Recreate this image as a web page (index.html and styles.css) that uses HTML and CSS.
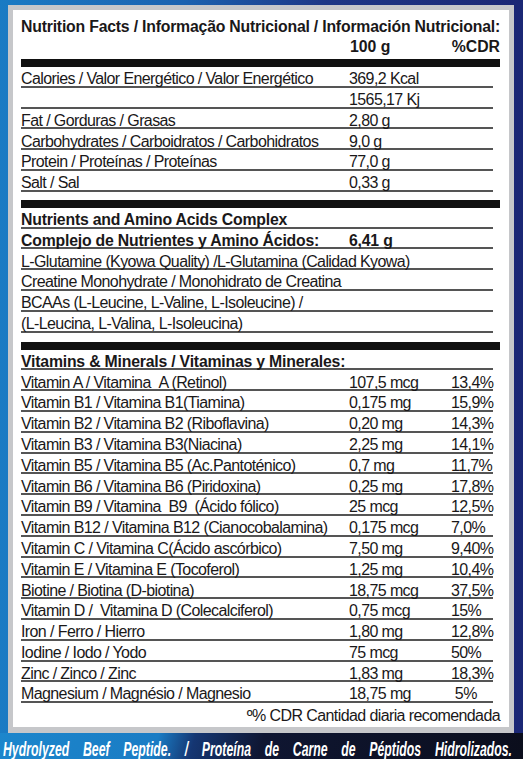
FILE: index.html
```html
<!DOCTYPE html>
<html>
<head>
    <meta charset="utf-8">
    <title>Nutrition Facts</title>
    <link rel="stylesheet" href="styles.css">
</head>
<body>
<div class="label">
    <div class="label-title">Nutrition Facts / Informação Nutricional / Información Nutricional:</div>
    <div class="label-head"><span></span><span>100 g</span><span>%CDR</span></div>
    <div class="bar"></div>
    <div class="rows">
        <div class="row"><span>Calories / Valor Energético / Valor Energético</span><span>369,2 Kcal</span><span></span></div>
        <div class="row"><span></span><span>1565,17 Kj</span><span></span></div>
        <div class="row"><span>Fat / Gorduras / Grasas</span><span>2,80 g</span><span></span></div>
        <div class="row"><span>Carbohydrates / Carboidratos / Carbohidratos</span><span>9,0 g</span><span></span></div>
        <div class="row"><span>Protein / Proteínas / Proteínas</span><span>77,0 g</span><span></span></div>
        <div class="row"><span>Salt / Sal</span><span>0,33 g</span><span></span></div>
    </div>
    <div class="bar gap-8"></div>
    <div class="rows">
        <div class="row strong"><span>Nutrients and Amino Acids Complex</span><span></span><span></span></div>
        <div class="row strong"><span>Complejo de Nutrientes y Amino Ácidos:</span><span>6,41 g</span><span></span></div>
        <div class="row"><span>L-Glutamine (Kyowa Quality) /L-Glutamina (Calidad Kyowa)</span></div>
        <div class="row"><span>Creatine Monohydrate / Monohidrato de Creatina</span></div>
        <div class="row"><span>BCAAs (L-Leucine, L-Valine, L-Isoleucine) /</span></div>
        <div class="row"><span>(L-Leucina, L-Valina, L-Isoleucina)</span></div>
    </div>
    <div class="bar gap-9"></div>
    <div class="rows">
        <div class="row strong"><span>Vitamins &amp; Minerals / Vitaminas y Minerales:</span><span></span><span></span></div>
        <div class="row"><span>Vitamin A / Vitamina &nbsp;A (Retinol)</span><span>107,5 mcg</span><span>13,4%</span></div>
        <div class="row"><span>Vitamin B1 / Vitamina B1(Tiamina)</span><span>0,175 mg</span><span>15,9%</span></div>
        <div class="row"><span>Vitamin B2 / Vitamina B2 (Riboflavina)</span><span>0,20 mg</span><span>14,3%</span></div>
        <div class="row"><span>Vitamin B3 / Vitamina B3(Niacina)</span><span>2,25 mg</span><span>14,1%</span></div>
        <div class="row"><span>Vitamin B5 / Vitamina B5 (Ac.Pantoténico)</span><span>0,7 mg</span><span>11,7%</span></div>
        <div class="row"><span>Vitamin B6 / Vitamina B6 (Piridoxina)</span><span>0,25 mg</span><span>17,8%</span></div>
        <div class="row"><span>Vitamin B9 / Vitamina &nbsp;B9 &nbsp;(Ácido fólico)</span><span>25 mcg</span><span>12,5%</span></div>
        <div class="row"><span>Vitamin B12 / Vitamina B12 (Cianocobalamina)</span><span>0,175 mcg</span><span>7,0%</span></div>
        <div class="row"><span>Vitamin C / Vitamina C(Ácido ascórbico)</span><span>7,50 mg</span><span>9,40%</span></div>
        <div class="row"><span>Vitamin E / Vitamina E (Tocoferol)</span><span>1,25 mg</span><span>10,4%</span></div>
        <div class="row"><span>Biotine / Biotina (D-biotina)</span><span>18,75 mcg</span><span>37,5%</span></div>
        <div class="row"><span>Vitamin D / &nbsp;Vitamina D (Colecalciferol)</span><span>0,75 mcg</span><span>15%</span></div>
        <div class="row"><span>Iron / Ferro / Hierro</span><span>1,80 mg</span><span>12,8%</span></div>
        <div class="row"><span>Iodine / Iodo / Yodo</span><span>75 mcg</span><span>50%</span></div>
        <div class="row"><span>Zinc / Zinco / Zinc</span><span>1,83 mg</span><span>18,3%</span></div>
        <div class="row"><span>Magnesium / Magnésio / Magnesio</span><span>18,75 mg</span><span>&nbsp;5%</span></div>
    </div>
    <p class="note">º% CDR Cantidad diaria recomendada</p>
</div>
<div class="strip">
    <p>Hydrolyzed Beef Peptide. / Proteína de Carne de Péptidos Hidrolizados.</p>
</div>
</body>
</html>
```
FILE: styles.css
```css
html,body{
    margin: 0;
    height: 759px;
    overflow: hidden;
}
body{
    display: flex;
    flex-direction: column;
    background: linear-gradient(to right, #1a7bc4 0%, #1b62b0 35%, #1e3786 62%, #1b2775 100%);
    font-family: "Liberation Sans", Arial, sans-serif;
    color: #1a1819;
}
.label{
    margin: 5px 9px 0 8px;
    border: 5px solid #c6c7ca;
    border-bottom-width: 6px;
    background: #fff;
    padding: 6.6px 9px 1px 8px;
}
.label-title{
    font-weight: bold;
    font-size: 15.8px;
    line-height: 20px;
    letter-spacing: -0.2px;
    white-space: nowrap;
}
.label-head{
    display: grid;
    grid-template-columns: 329px 1fr auto;
    font-weight: bold;
    font-size: 15.8px;
    line-height: 20px;
}
.bar{
    height: 8px;
    margin-top: 2.4px;
    background: #111;
}
.bar.gap-8{
    margin-top: 8px;
}
.bar.gap-9{
    margin-top: 9px;
}
.rows{
    margin-right: 7px;
}
.row{
    display: grid;
    grid-template-columns: 328px 102px 1fr;
    box-sizing: border-box;
    height: 20.8px;
    padding-top: 4.2px;
    line-height: 16px;
    font-size: 16px;
    letter-spacing: -0.6px;
    white-space: nowrap;
    border-bottom: 2px solid #555;
}
.row.strong{
    font-weight: bold;
    font-size: 15.8px;
    letter-spacing: -0.2px;
}
.note{
    margin: 0;
    padding-top: 3px;
    line-height: 20px;
    font-size: 16px;
    letter-spacing: -0.6px;
    text-align: right;
}
.strip{
    flex: 1;
    overflow: hidden;
    padding: 7px 11px 0 3px;
    background: linear-gradient(105deg, #1c86cc 0%, #1a7cc4 30%, #153672 37%, #0f1632 50%, #0b0e1c 100%);
}
.strip p{
    margin: 0 -299px 0 0;
    width: 808px;
    transform: scaleX(0.63);
    transform-origin: 0 0;
    color: #fff;
    font-weight: bold;
    font-style: italic;
    font-size: 19.5px;
    line-height: 18px;
    text-align: justify;
    text-align-last: justify;
}
```
